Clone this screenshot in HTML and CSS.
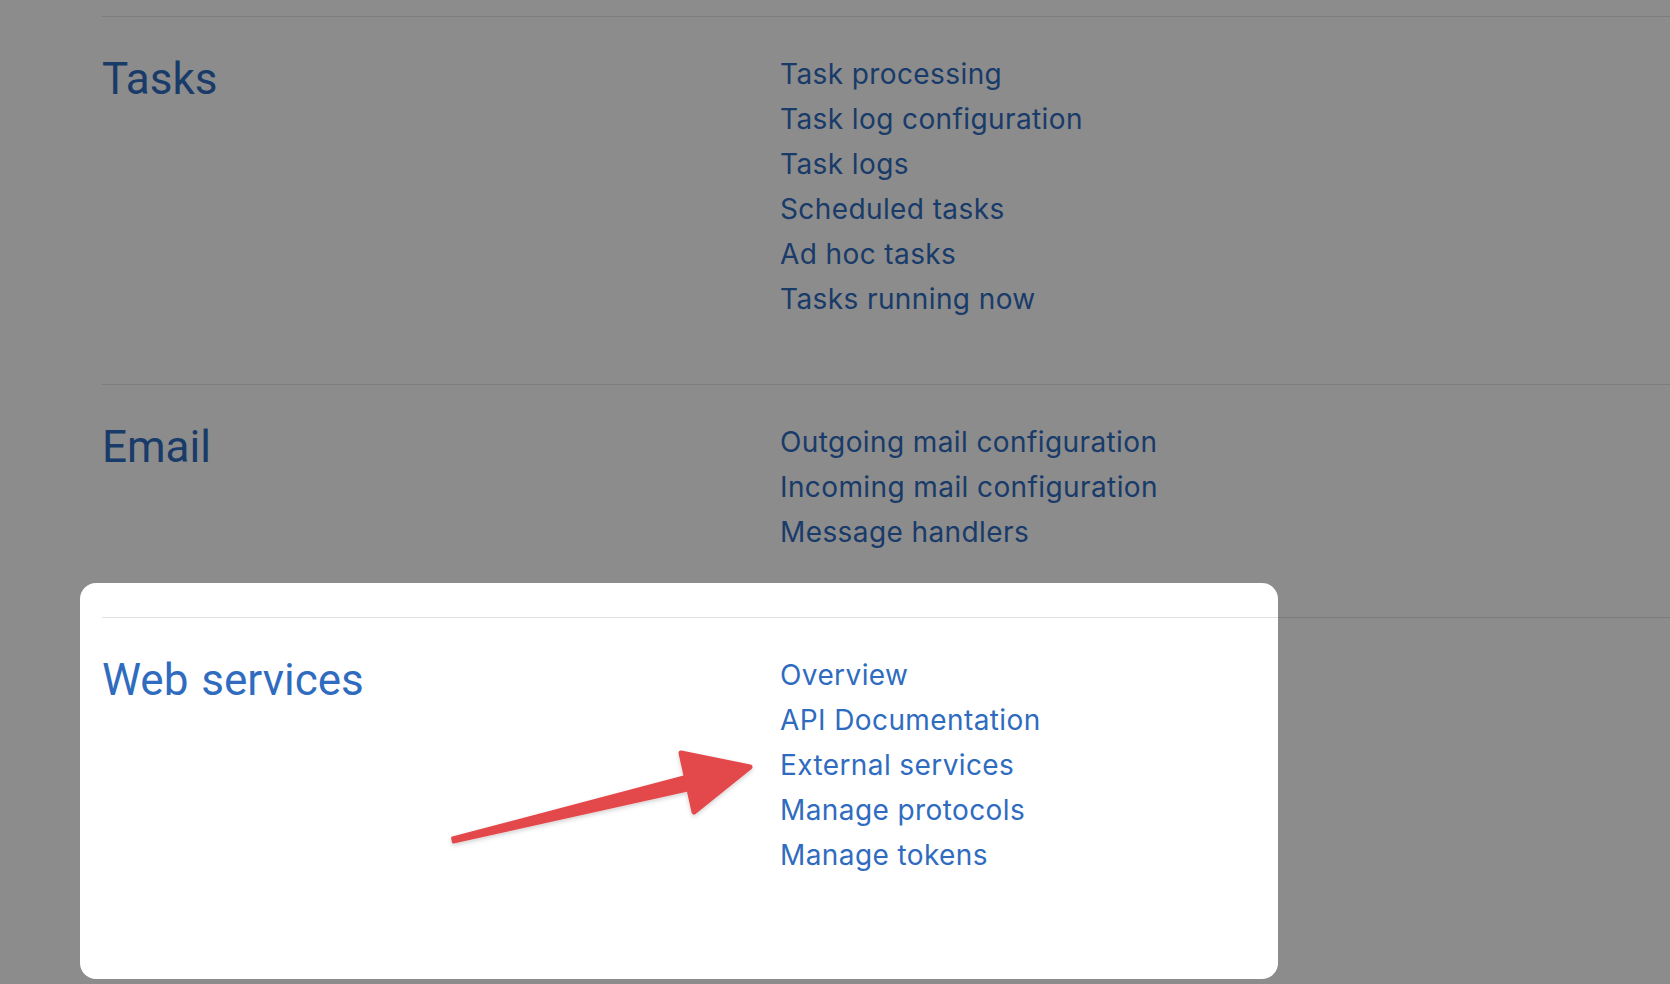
FILE: index.html
```html
<!DOCTYPE html>
<html lang="en">
<head>
<meta charset="utf-8">
<title>Site administration - Server</title>
<link rel="stylesheet" href="styles.css">
</head>
<body>
<main class="page">
  <section class="group">
    <h3 class="group-title">Tasks</h3>
    <ul class="links">
      <li><a href="#">Task processing</a></li>
      <li><a href="#">Task log configuration</a></li>
      <li><a href="#">Task logs</a></li>
      <li><a href="#">Scheduled tasks</a></li>
      <li><a href="#">Ad hoc tasks</a></li>
      <li><a href="#">Tasks running now</a></li>
    </ul>
  </section>
  <section class="group">
    <h3 class="group-title">Email</h3>
    <ul class="links">
      <li><a href="#">Outgoing mail configuration</a></li>
      <li><a href="#">Incoming mail configuration</a></li>
      <li><a href="#">Message handlers</a></li>
    </ul>
  </section>
  <section class="group">
    <h3 class="group-title">Web services</h3>
    <ul class="links">
      <li><a href="#">Overview</a></li>
      <li><a href="#">API Documentation</a></li>
      <li><a href="#">External services</a></li>
      <li><a href="#">Manage protocols</a></li>
      <li><a href="#">Manage tokens</a></li>
    </ul>
  </section>
</main>
<div class="spotlight"></div>
<svg class="annotation" width="1670" height="984" viewBox="0 0 1670 984" aria-hidden="true">
  <defs>
    <filter id="shadow" x="-10%" y="-10%" width="120%" height="130%">
      <feDropShadow dx="0" dy="2" stdDeviation="2" flood-color="#000" flood-opacity="0.18"/>
    </filter>
  </defs>
  <g filter="url(#shadow)" fill="#e3484b" stroke="#e3484b" stroke-linejoin="round" stroke-linecap="round">
    <polygon points="452.6,838 694.3,774.2 697.7,787.8 453.4,842" stroke-width="3"/>
    <polygon points="681,753 750,767 694,812" stroke-width="5"/>
  </g>
</svg>
</body>
</html>
```

FILE: styles.css
```css
html, body {
  margin: 0;
  padding: 0;
}

body {
  background: #ffffff;
  width: 1670px;
  height: 984px;
  overflow: hidden;
  position: relative;
  font-family: "Inter", "Liberation Sans", sans-serif;
}

.page {
  padding-top: 16px;
  padding-left: 102px;
}

.group {
  border-top: 1px solid #dee2e6;
  display: grid;
  grid-template-columns: 678px 1fr;
  padding-top: 35px;
  padding-bottom: 62px;
}

.group-title {
  margin: 1px 0 0 0;
  font-family: "Roboto", "Liberation Sans", sans-serif;
  font-weight: 400;
  font-size: 44px;
  line-height: 1.2;
  word-spacing: 2px;
  color: #2f6cc0;
}

.links {
  list-style: none;
  margin: 0;
  padding: 0;
  display: flex;
  flex-direction: column;
}

.links li {
  height: 45px;
}

.links a {
  font-family: "Inter", "Liberation Sans", sans-serif;
  font-size: 28px;
  line-height: 45px;
  letter-spacing: 0.4px;
  color: #2f6cc0;
  text-decoration: none;
}

.spotlight {
  position: absolute;
  left: 80px;
  top: 583px;
  width: 1198px;
  height: 396px;
  border-radius: 16px;
  box-shadow: 0 0 0 3000px rgba(0, 0, 0, 0.45);
  pointer-events: none;
}

.annotation {
  position: absolute;
  left: 0;
  top: 0;
  pointer-events: none;
}
```
